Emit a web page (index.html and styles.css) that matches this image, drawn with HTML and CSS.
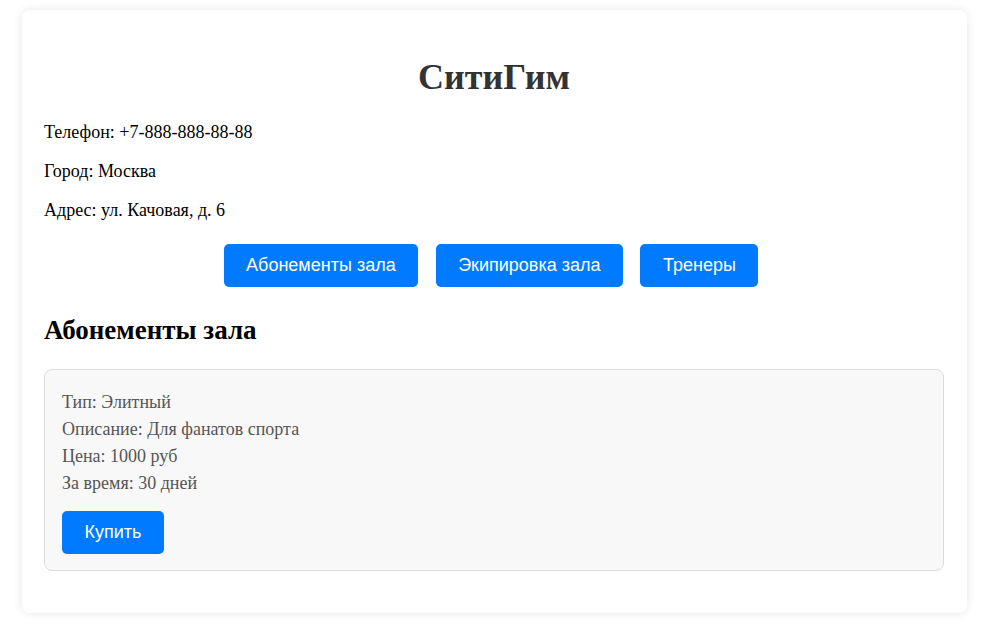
FILE: index.html
```html
<!DOCTYPE html>
<html lang="ru">
<head>
<meta charset="utf-8">
<title>СитиГим</title>
<link rel="stylesheet" href="styles.css">
</head>
<body>
<div class="container">
  <h1 class="title">СитиГим</h1>
  <p class="info">Телефон: +7-888-888-88-88</p>
  <p class="info">Город: Москва</p>
  <p class="info">Адрес: ул. Качовая, д. 6</p>
  <nav class="nav">
    <button class="btn">Абонементы зала</button>
    <button class="btn">Экипировка зала</button>
    <button class="btn">Тренеры</button>
  </nav>
  <h2 class="section-title">Абонементы зала</h2>
  <div class="card">
    <p class="line">Тип: Элитный</p>
    <p class="line">Описание: Для фанатов спорта</p>
    <p class="line">Цена: 1000 руб</p>
    <p class="line">За время: 30 дней</p>
    <button class="btn buy">Купить</button>
  </div>
</div>
</body>
</html>
```
FILE: styles.css
```css
html, body {
  margin: 0;
  padding: 0;
  background: #ffffff;
}
body {
  padding: 10px 24px 14px 22px;
  font-family: "Liberation Serif", "Times New Roman", serif;
  font-size: 18px;
  color: #000;
}
.container {
  background: #fff;
  border-radius: 8px;
  box-shadow: 0 0 10px rgba(0, 0, 0, 0.1);
  padding: 22px 23px 22px 22px;
  display: flow-root;
}
.title {
  font-size: 36px;
  font-weight: bold;
  color: #333;
  text-align: center;
  margin: 24px 0;
}
.info {
  margin: 18px 0;
}
.nav {
  display: flex;
  justify-content: center;
  gap: 17.5px;
  margin: 22.5px 6px 28.5px 0;
}
.btn {
  font-family: "Liberation Sans", Arial, sans-serif;
  font-size: 18px;
  line-height: 21px;
  color: #fff;
  background: #007bff;
  border: none;
  border-radius: 5px;
  padding: 11px 22.5px;
  cursor: pointer;
}
.section-title {
  font-size: 27px;
  font-weight: bold;
  margin: 28.5px 0 22.5px;
}
.card {
  background: #f8f8f8;
  border: 1px solid #dcdcdc;
  border-radius: 8px;
  padding: 19.5px 17px 16px;
  margin-bottom: 20px;
  color: #555;
}
.line {
  margin: 0;
  line-height: 27px;
}
.buy {
  margin-top: 13.5px;
}
```
